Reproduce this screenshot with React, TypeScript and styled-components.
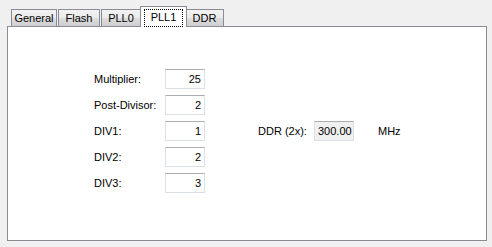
import styled, { createGlobalStyle } from "styled-components";

const GlobalStyle = createGlobalStyle`
  html, body {
    margin: 0;
    padding: 0;
    background: #f0f0f0;
  }
  body {
    font-family: "Liberation Sans", Arial, sans-serif;
    font-size: 11px;
    color: #000;
  }
`;

const tabs = [
  { name: "General", width: 46 },
  { name: "Flash", width: 42 },
  { name: "PLL0", width: 40 },
  { name: "PLL1", width: 47 },
  { name: "DDR", width: 39 },
];
const selected = "PLL1";

const rows = [
  { label: "Multiplier:", value: "25" },
  { label: "Post-Divisor:", value: "2" },
  { label: "DIV1:", value: "1" },
  { label: "DIV2:", value: "2" },
  { label: "DIV3:", value: "3" },
];

export default function App() {
  return (
    <>
      <GlobalStyle />
      <Window>
        <TabStrip>
          {tabs.map((t) => (
            <Tab key={t.name} $active={t.name === selected} $width={t.width}>
              {t.name === selected ? <FocusRing>{t.name}</FocusRing> : t.name}
            </Tab>
          ))}
        </TabStrip>
        <Panel>
          <Form>
            {rows.map((r, i) => (
              <Row key={r.label}>
                <Label>{r.label}</Label>
                <NumberBox>{r.value}</NumberBox>
                {i === 2 && (
                  <>
                    <DdrLabel>DDR (2x):</DdrLabel>
                    <NumberBox $readOnly>300.00</NumberBox>
                    <Unit>MHz</Unit>
                  </>
                )}
              </Row>
            ))}
          </Form>
        </Panel>
      </Window>
    </>
  );
}

const Window = styled.div`
  width: 492px;
  height: 247px;
  box-sizing: border-box;
  padding: 6px 0 0 7px;
  background: #f0f0f0;
  overflow: hidden;
`;

const TabStrip = styled.div`
  display: flex;
  align-items: flex-end;
  height: 20px;
  padding-left: 4px;
`;

const Tab = styled.div<{ $active: boolean; $width: number }>`
  position: relative;
  z-index: ${({ $active }) => ($active ? 1 : 0)};
  box-sizing: border-box;
  width: ${({ $width }) => $width}px;
  height: ${({ $active }) => ($active ? "21px" : "17px")};
  margin: ${({ $active }) => ($active ? "0 -2px -1px -2px" : "0 1px 0 0")};
  border: 1px solid #898c95;
  border-bottom: none;
  background: ${({ $active }) =>
    $active ? "#fff" : "linear-gradient(#f2f2f2 0%, #ebebeb 50%, #dddddd 51%, #cfcfcf 100%)"};
  display: flex;
  justify-content: center;
  align-items: ${({ $active }) => ($active ? "flex-start" : "center")};
  padding-top: ${({ $active }) => ($active ? "2px" : "0")};
  white-space: nowrap;
`;

const FocusRing = styled.span`
  display: block;
  border: 1px dotted #000;
  padding: 1px 6px 2px 6px;
  line-height: 13px;
`;

const Panel = styled.div`
  width: 480px;
  height: 215px;
  box-sizing: border-box;
  border: 1px solid #898c95;
  background: #fff;
  padding: 42px 0 0 86px;
`;

const Form = styled.div`
  display: flex;
  flex-direction: column;
  gap: 6px;
`;

const Row = styled.div`
  display: flex;
  align-items: center;
  height: 20px;
`;

const Label = styled.span`
  width: 71px;
`;

const NumberBox = styled.div<{ $readOnly?: boolean }>`
  box-sizing: border-box;
  width: 40px;
  height: 20px;
  border: 1px solid #dbdfe6;
  border-top-color: #abadb3;
  background: ${({ $readOnly }) => ($readOnly ? "#f0f0f0" : "#fff")};
  text-align: right;
  padding: 0 3px;
  line-height: 18px;
`;

const DdrLabel = styled.span`
  width: 56px;
  margin-left: 53px;
`;

const Unit = styled.span`
  margin-left: 24px;
`;
